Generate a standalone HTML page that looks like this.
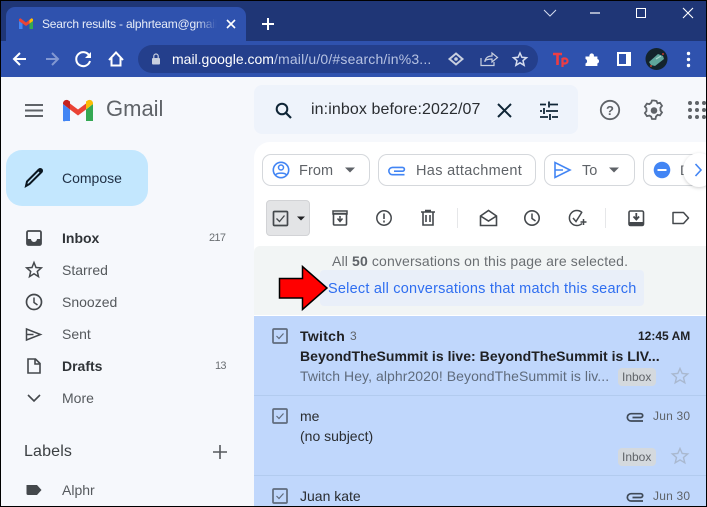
<!DOCTYPE html>
<html><head><meta charset="utf-8">
<style>
html,body{margin:0;padding:0;width:707px;height:507px;overflow:hidden;background:#f6f8fc}
body{position:relative;font-family:"Liberation Sans",sans-serif}
.t{position:absolute;white-space:nowrap;line-height:18px;height:18px}
.b{position:absolute}
svg{position:absolute;left:0;top:0}
</style></head><body>
<div class="b" style="left:0;top:0;width:707px;height:41px;background:#1f3676"></div>
<div class="b" style="left:0;top:41px;width:707px;height:36px;background:#2f52ae"></div>
<div class="b" style="left:6px;top:7px;width:240px;height:36px;background:#2f52ae;border-radius:9px 9px 0 0"></div>
<div class="b" style="left:138px;top:45px;width:400px;height:28px;background:#243f8c;border-radius:14px"></div>
<div class="b" style="left:0;top:77px;width:707px;height:430px;background:#f6f8fc"></div>

<div class="t" style="left:42px;top:15px;width:176px;overflow:hidden;font-size:12px;color:#e8edf8;letter-spacing:-.2px">Search results - alphrteam@gmail.com</div>
<div class="b" style="left:196px;top:14px;width:23px;height:20px;background:linear-gradient(90deg,rgba(47,82,174,0),#2f52ae 90%)"></div>
<div class="t" style="left:172px;top:50px;font-size:14px;color:#fff">mail.google.com<span style="color:#b6c2e2;letter-spacing:.17px">/mail/u/0/#search/in%3...</span></div>

<div class="b" style="left:254px;top:85px;width:324px;height:49px;background:#eef3fb;border-radius:8px"></div>
<div class="t" style="left:311px;top:101px;width:171px;overflow:hidden;font-size:16px;color:#2a2d31;letter-spacing:.1px">in:inbox before:2022/07</div>
<div class="t" style="left:106px;top:98px;font-size:22px;line-height:22px;height:24px;color:#5f6368">Gmail</div>

<div class="b" style="left:6px;top:150px;width:142px;height:56px;background:#c3e7fe;border-radius:16px"></div>
<div class="t" style="left:62px;top:169px;font-size:14px;color:#1f2f44">Compose</div>

<div class="t" style="left:62px;top:229px;font-size:14px;font-weight:bold;color:#303438">Inbox</div>
<div class="t" style="left:209px;top:229px;font-size:11px;letter-spacing:-.7px;color:#6b6f73">217</div>
<div class="t" style="left:215px;top:357px;font-size:11px;letter-spacing:-.7px;color:#6b6f73">13</div>
<div class="t" style="left:62px;top:261px;font-size:14px;color:#55595d">Starred</div>
<div class="t" style="left:62px;top:293px;font-size:14px;color:#55595d">Snoozed</div>
<div class="t" style="left:62px;top:325px;font-size:14px;color:#55595d">Sent</div>
<div class="t" style="left:62px;top:357px;font-size:14px;font-weight:bold;color:#303438">Drafts</div>
<div class="t" style="left:62px;top:389px;font-size:14px;color:#55595d">More</div>
<div class="t" style="left:24px;top:443px;font-size:16px;color:#3c4043;letter-spacing:.15px">Labels</div>
<div class="t" style="left:62px;top:481px;font-size:14px;color:#55595d">Alphr</div>

<!-- main panel -->
<div class="b" style="left:254px;top:142px;width:453px;height:365px;background:#fff;border-radius:16px 0 0 0"></div>
<div class="b" style="left:262px;top:154px;width:108px;height:32px;border:1px solid #d5d8dc;border-radius:9px;box-sizing:border-box"></div>
<div class="b" style="left:378px;top:154px;width:158px;height:32px;border:1px solid #d5d8dc;border-radius:9px;box-sizing:border-box"></div>
<div class="b" style="left:544px;top:154px;width:91px;height:32px;border:1px solid #d5d8dc;border-radius:9px;box-sizing:border-box"></div>
<div class="b" style="left:643px;top:154px;width:64px;height:32px;border:1px solid #d5d8dc;border-radius:9px;box-sizing:border-box"></div>
<div class="t" style="left:299px;top:162px;font-size:14.5px;color:#5f6368;letter-spacing:.1px">From</div>
<div class="t" style="left:416px;top:162px;font-size:14.5px;color:#5f6368;letter-spacing:.33px">Has attachment</div>
<div class="t" style="left:582px;top:162px;font-size:14.5px;color:#5f6368">To</div>
<div class="t" style="left:680px;top:161px;font-size:14px;color:#5f6368">D</div>
<div class="b" style="left:683px;top:153px;width:32px;height:34px;background:#fff;border-radius:50%;box-shadow:0 1px 3px rgba(60,64,67,.25)"></div>

<div class="b" style="left:266px;top:200px;width:44px;height:36px;background:#e3e4e6;border:1px solid #d2d3d6;border-radius:4px;box-sizing:border-box"></div>

<div class="b" style="left:254px;top:246px;width:453px;height:69px;background:#f2f5f5;border-radius:6px 0 0 0"></div>
<div class="b" style="left:320px;top:270px;width:324px;height:36px;background:#e9eff9;border-radius:4px"></div>
<div class="t" style="left:332px;top:252px;font-size:14px;color:#6a6e72;letter-spacing:.14px">All <b style="color:#5f6368">50</b> conversations on this page are selected.</div>
<div class="t" style="left:328px;top:280px;font-size:14.5px;color:#2f6ef0;letter-spacing:.22px">Select all conversations that match this search</div>

<!-- rows -->
<div class="b" style="left:254px;top:316px;width:453px;height:191px;background:#c0d7fc"></div>
<div class="b" style="left:254px;top:395px;width:453px;height:1px;background:#b2cbef"></div>
<div class="b" style="left:254px;top:475px;width:453px;height:1px;background:#b2cbef"></div>

<div class="t" style="left:300px;top:327px;font-size:14px;font-weight:bold;color:#202124;letter-spacing:.3px">Twitch</div>
<div class="t" style="left:350px;top:327px;font-size:12px;color:#5f6368">3</div>
<div class="t" style="left:638px;top:327px;font-size:12px;font-weight:bold;color:#202124">12:45 AM</div>
<div class="t" style="left:300px;top:347px;font-size:14px;font-weight:bold;color:#202124;letter-spacing:.03px">BeyondTheSummit is live: BeyondTheSummit is LIV...</div>
<div class="t" style="left:300px;top:367px;font-size:14px;color:#5f6b7c;letter-spacing:.065px">Twitch Hey, alphr2020! BeyondTheSummit is liv...</div>
<div class="b" style="left:618px;top:368px;width:38px;height:18px;background:#d4d9de;border-radius:4px"></div>
<div class="t" style="left:622px;top:368px;font-size:12px;color:#5f6368">Inbox</div>

<div class="t" style="left:300px;top:407px;font-size:14px;color:#2a2d31">me</div>
<div class="t" style="left:653px;top:407px;font-size:12px;color:#5f6368;letter-spacing:.2px">Jun 30</div>
<div class="t" style="left:300px;top:427px;font-size:14px;color:#2a2d31">(no subject)</div>
<div class="b" style="left:618px;top:448px;width:38px;height:18px;background:#d4d9de;border-radius:4px"></div>
<div class="t" style="left:622px;top:448px;font-size:12px;color:#5f6368">Inbox</div>

<div class="t" style="left:300px;top:487px;font-size:14px;color:#2a2d31">Juan kate</div>
<div class="t" style="left:653px;top:487px;font-size:12px;color:#5f6368;letter-spacing:.2px">Jun 30</div>

<svg width="707" height="507" viewBox="0 0 707 507">
<!-- tab favicon -->
<path d="M19 29V21l3.500 2.500V29z" fill="#4285f4"/><path d="M29.500 29v-5.500L33 21v8z" fill="#34a853"/>
<path d="M19 21l7 5 7-5v-2l-1.500-.8L26 22.500 20.500 18.200 19 19z" fill="#ea4335"/><path d="M29.500 20l2-1.800 1.500.8v2l-3.500 2.500z" fill="#fbbc04"/>
<path d="M227 20l8 8M235 20l-8 8" stroke="#fff" stroke-width="1.600" fill="none"/>
<path d="M268 18v12M262 24h12" stroke="#fff" stroke-width="2" fill="none"/>
<!-- window -->
<path d="M544 10l6 6 6-6" stroke="#d5dcee" stroke-width="1" fill="none"/>
<path d="M590 13h10" stroke="#fff" stroke-width="1.200"/>
<rect x="636.500" y="8.500" width="9" height="9" fill="none" stroke="#fff"/>
<path d="M683 8l10 10M693 8l-10 10" stroke="#fff" stroke-width="1.100"/>
<!-- nav -->
<path d="M26 59H14M20 53l-6 6 6 6" stroke="#fff" stroke-width="2" fill="none"/>
<path d="M46 59h12M52 53l6 6-6 6" stroke="#8298d2" stroke-width="2" fill="none"/>
<path d="M89.500 56a7 7 0 1 0 .5 5" stroke="#fff" stroke-width="2" fill="none"/><path d="M91 52v6h-6z" fill="#fff"/>
<path d="M109 60l7-7.500 7 7.500M111.500 58v7.500h9V58" stroke="#fff" stroke-width="2" fill="none"/>
<rect x="152" y="58" width="8" height="6.500" rx="1" fill="#c8cfdf"/><path d="M153.800 58v-1.800a2.200 2.200 0 0 1 4.400 0V58" stroke="#c8cfdf" fill="none" stroke-width="1.200"/>
<path d="M456 53.500l6.500 5.500-6.500 5.500-6.500-5.500z" fill="none" stroke="#c8cfdf" stroke-width="2"/><circle cx="456" cy="59" r="1.800" fill="#c8cfdf"/>
<path d="M481 58v7.500h13V62M485 62c0-4 3-6 7-6v-3l5.500 4.500-5.500 4.500v-3c-3 0-5 .5-7 1.500z" fill="none" stroke="#c8cfdf" stroke-width="1.200"/>
<path d="M520 53l1.900 4.300 4.600.4-3.500 3 1.100 4.600-4.100-2.500-4.100 2.500 1.100-4.600-3.500-3 4.600-.4z" fill="none" stroke="#d5dcee" stroke-width="1.500"/>
<!-- ext -->
<path d="M553 54h9M557.500 54v11" fill="none" stroke="#ee3d42" stroke-width="2.600"/>
<path d="M562.500 58v9M562.500 58.500h2.500a2.400 2.400 0 0 1 0 5h-2.500" fill="none" stroke="#ee3d42" stroke-width="2.200"/>
<path d="M585.500 56.500h4a2.300 2.300 0 0 1 4.400-1.500v1.500h3.500v2.500a2.300 2.300 0 0 1 0 4.400v2.600h-11.900v-2.500a2.400 2.400 0 0 0 0-4.500z" fill="#fff"/>
<rect x="618" y="53" width="12" height="12" fill="#2f52ae" stroke="#fff" stroke-width="2"/><rect x="626" y="53" width="5" height="12" fill="#fff"/>
<circle cx="656.500" cy="59" r="11" fill="#13232c"/><path d="M649 62l9-8 5 2 1 3-9 7-4-1z" fill="#5fa59b"/><path d="M656 59l5-3" stroke="#a9d8cf" stroke-width="1.200"/><circle cx="663" cy="54" r="1" fill="#c0392b"/><circle cx="651" cy="66" r="1" fill="#c0392b"/>
<circle cx="688.500" cy="53.500" r="1.700" fill="#fff"/><circle cx="688.500" cy="59.500" r="1.700" fill="#fff"/><circle cx="688.500" cy="65.500" r="1.700" fill="#fff"/>
<!-- hamburger -->
<path d="M25 105h18M25 110.500h18M25 116h18" stroke="#5f6368" stroke-width="2"/>
<!-- gmail M -->
<path d="M63 121V104l7 5.500V121h-4.500A2.500 2.500 0 0 1 63 121z" fill="#4285f4"/>
<path d="M86 121h7V104l-7 5.500z" fill="#34a853"/>
<path d="M70 109.500l8 6 8-6v-6l-8 6-8-6z" fill="#ea4335"/>
<path d="M63 104v-.5c0-3 3.500-4.500 5.500-3l1.500 1v8z" fill="#c5221f"/>
<path d="M86 101.500l1.500-1c2.500-1.500 5.500 0 5.500 3v.5l-7 5.500z" fill="#fbbc04"/>
<!-- compose pencil -->
<path d="M26 186l1-4.500 12-12a1.500 1.500 0 0 1 2.500 2.500l-12 12z" fill="none" stroke="#0b1720" stroke-width="2"/><path d="M37 170l3-2 2.500 2.500-2 3z" fill="#0b1720"/>
<!-- sidebar icons -->
<rect x="27" y="231" width="14" height="14" rx="1.500" fill="none" stroke="#44484c" stroke-width="1.800"/><path d="M27 239h4a3 3 0 0 0 6 0h4v6H27z" fill="#44484c"/>
<path d="M34 262.500l2 5 5.300.4-4 3.500 1.200 5.200-4.500-2.800-4.500 2.800 1.200-5.200-4-3.500 5.300-.4z" fill="none" stroke="#44484c" stroke-width="1.500"/>
<circle cx="34" cy="302" r="7.500" fill="none" stroke="#44484c" stroke-width="1.700"/><path d="M34 297.500v5l3.500 2.500" fill="none" stroke="#44484c" stroke-width="1.500"/>
<path d="M26.500 329v11l14-5.500zM26.500 334.500h7" fill="none" stroke="#44484c" stroke-width="1.500"/>
<path d="M28 359h7.500l4.500 4.500V373H28zM35 359v5h5" fill="none" stroke="#44484c" stroke-width="1.600"/>
<path d="M28 395l6 6 6-6" fill="none" stroke="#44484c" stroke-width="1.600"/>
<path d="M220 445v14M213 452h14" stroke="#55595d" stroke-width="1.600"/>
<path d="M26.500 485h10.500l4.500 5-4.500 5H28a1.500 1.500 0 0 1-1.500-1.500z" fill="#44484c"/>
<!-- search bar -->
<circle cx="282" cy="109" r="5.300" fill="none" stroke="#0f2536" stroke-width="2"/><path d="M286 113l5 5" stroke="#0f2536" stroke-width="2.200"/>
<path d="M498 104l13 13M511 104l-13 13" stroke="#0f2536" stroke-width="2"/>
<path d="M540 104.500h6M550 104.500h8M540 111h2M546 111h12M540 117h8M552 117h6M549 101.500v6M544 108v6M550 114v6" stroke="#0f2536" stroke-width="1.800" fill="none"/>
<circle cx="610" cy="110" r="9.200" fill="none" stroke="#5f6368" stroke-width="1.800"/>
<text x="610" y="115" text-anchor="middle" font-family="Liberation Sans" font-size="13" font-weight="bold" fill="#5f6368">?</text>
<path d="M654 100.500l2.500.5 1 2.300 2.500-.5 2 3-1.600 2 .1 2.700 1.500 1.900-2 3-2.500-.5-1.500 1.700-.5 2.400h-3.500l-.8-2.400-1.800-1-2.500.5-2-3 1.600-2-.1-2.700-1.500-1.800 2-3 2.500.5 1.800-1.400.8-2.200z" fill="none" stroke="#5f6368" stroke-width="1.800"/><circle cx="654" cy="110.500" r="3.300" fill="#5f6368"/>
<g fill="#5f6368"><circle cx="690" cy="103" r="2"/><circle cx="697" cy="103" r="2"/><circle cx="704" cy="103" r="2"/><circle cx="690" cy="110" r="2"/><circle cx="697" cy="110" r="2"/><circle cx="704" cy="110" r="2"/><circle cx="690" cy="117" r="2"/><circle cx="697" cy="117" r="2"/><circle cx="704" cy="117" r="2"/></g>
<!-- chips -->
<circle cx="281" cy="170" r="7.700" fill="none" stroke="#4285f4" stroke-width="1.600"/><circle cx="281" cy="167.500" r="2.500" fill="none" stroke="#4285f4" stroke-width="1.500"/><path d="M275.500 175c1.500-2.500 9.500-2.500 11 0" fill="none" stroke="#4285f4" stroke-width="1.500"/>
<path d="M345 167.500h10l-5 5z" fill="#5f6368"/>
<path d="M394 171.200h8.500a1.900 1.900 0 0 0 0-3.800H392.500a3.600 3.600 0 0 0 0 7.300H404.500" fill="none" stroke="#4285f4" stroke-width="1.600"/>
<path d="M555 162.500v15l15-7.500zM555 170h8" fill="none" stroke="#4285f4" stroke-width="1.600"/>
<path d="M609 167.500h10l-5 5z" fill="#5f6368"/>
<circle cx="662" cy="170" r="8.300" fill="#4285f4"/><path d="M657.500 170h9" stroke="#fff" stroke-width="2"/>
<path d="M695.500 164l5.500 6-5.500 6" fill="none" stroke="#4285f4" stroke-width="1.600"/>
<!-- toolbar -->
<rect x="273.500" y="211.500" width="14" height="14" rx="1" fill="none" stroke="#44484c" stroke-width="1.700"/><path d="M276.500 218.500l3 3 5-6" fill="none" stroke="#44484c" stroke-width="1.300"/>
<path d="M297 216.500h8l-4 4z" fill="#202124"/>
<rect x="333.500" y="213.500" width="13" height="11.500" rx="1" fill="none" stroke="#44484c" stroke-width="1.600"/><path d="M333 211h14v3h-14z" fill="none" stroke="#44484c" stroke-width="1.500"/><path d="M340 216v5M337.500 218.500l2.500 3 2.500-3" fill="none" stroke="#44484c" stroke-width="1.500"/>
<circle cx="384" cy="218" r="7.200" fill="none" stroke="#44484c" stroke-width="1.500"/><path d="M384 213.500v5.500M384 220.500v2" stroke="#44484c" stroke-width="1.600"/>
<path d="M421 212h14M425 210.500h6M423 212v13h10v-13M426 215v7M430 215v7" fill="none" stroke="#44484c" stroke-width="1.600"/>
<path d="M457.500 208v20" stroke="#e6e7e9"/>
<path d="M480.500 216l8-5.500 8 5.500v9.500h-16zM480.500 216l8 5 8-5" fill="none" stroke="#44484c" stroke-width="1.600"/>
<circle cx="532" cy="218" r="7.200" fill="none" stroke="#44484c" stroke-width="1.600"/><path d="M532 213.500v5l3.500 2.500" fill="none" stroke="#44484c" stroke-width="1.500"/>
<path d="M582 212.500a7.500 7.500 0 1 0 0 11" fill="none" stroke="#44484c" stroke-width="1.500"/><path d="M573 218l3 3.500 6-9.500" fill="none" stroke="#44484c" stroke-width="1.500"/><path d="M583.500 219v6M580.500 222h6" stroke="#44484c" stroke-width="1.500"/>
<path d="M605.500 208v20" stroke="#e6e7e9"/>
<rect x="629" y="211" width="14.500" height="14.500" rx="1.500" fill="#fff" stroke="#44484c" stroke-width="1.600"/><path d="M629 222h14.500v4H629z" fill="#44484c"/><path d="M636.300 213v6M633.500 216.500l2.800 3 2.800-3" fill="none" stroke="#44484c" stroke-width="1.800"/>
<path d="M673 212.500h10.500l5 5.500-5 5.500H673z" fill="none" stroke="#44484c" stroke-width="1.500" stroke-linejoin="round"/>
<!-- arrow -->
<path d="M279.500 278.500h23V266.500L327 288l-24.500 21.500v-11.500h-23z" fill="#f00" stroke="#000" stroke-width="1.500"/>
<!-- row checks -->
<g fill="none" stroke="#5f6b7c"><rect x="273" y="329" width="14" height="14" rx="1" stroke-width="1.700"/><path d="M276.500 336l2.500 2.500 4.500-5" stroke-width="1.200"/>
<rect x="273" y="409" width="14" height="14" rx="1" stroke-width="1.700"/><path d="M276.500 416l2.500 2.500 4.500-5" stroke-width="1.200"/>
<rect x="273" y="489" width="14" height="14" rx="1" stroke-width="1.700"/><path d="M276.500 496l2.500 2.500 4.500-5" stroke-width="1.200"/></g>
<g fill="none" stroke="#a9b8cf" stroke-width="1.400"><path d="M680 368.500l2.200 5 5.500.4-4.200 3.600 1.300 5.300-4.800-2.900-4.800 2.900 1.300-5.300-4.200-3.600 5.500-.4z"/><path d="M680 448.500l2.200 5 5.500.4-4.200 3.600 1.300 5.300-4.800-2.900-4.800 2.900 1.300-5.300-4.200-3.600 5.500-.4z"/></g>
<g fill="none" stroke="#3f4a58" stroke-width="1.700"><path d="M632.500 417.500h8.300a1.900 1.900 0 0 0 0-3.800H631a3.600 3.600 0 0 0 0 7.300H643"/><path d="M632.500 497.500h8.300a1.900 1.900 0 0 0 0-3.800H631a3.600 3.600 0 0 0 0 7.300H643"/></g>
</svg>
<!-- screenshot border -->
<div class="b" style="left:0;top:0;width:707px;height:1px;background:#000"></div>
<div class="b" style="left:0;top:0;width:1px;height:507px;background:#000"></div>
<div class="b" style="left:0;top:506px;width:707px;height:1px;background:#000"></div>
<div class="b" style="left:706px;top:0;width:1px;height:507px;background:#000"></div>
</body></html>
